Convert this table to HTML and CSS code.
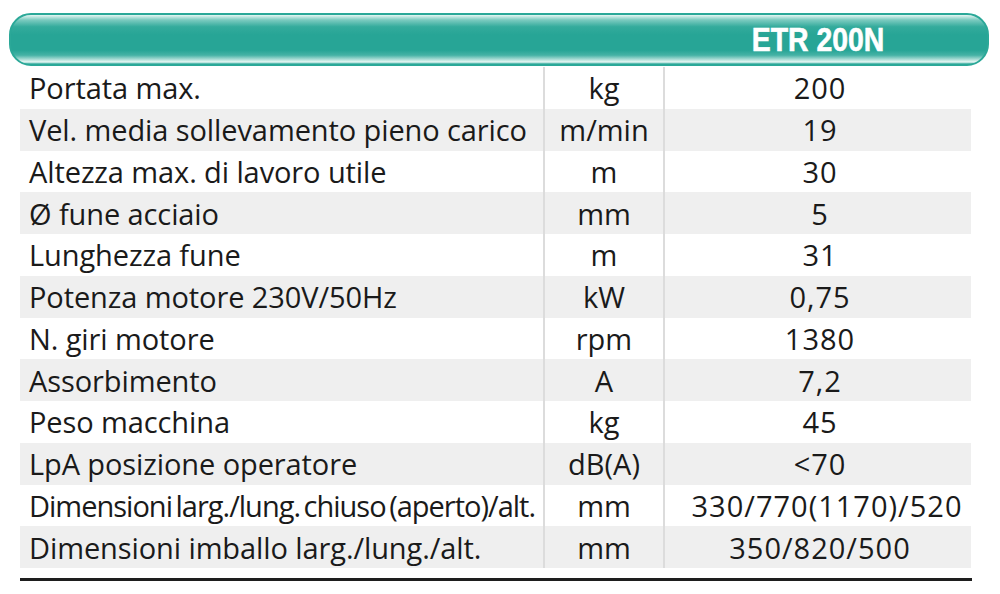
FILE: index.html
```html
<!DOCTYPE html>
<html lang="it">
<head>
<meta charset="utf-8">
<title>ETR 200N</title>
<link rel="stylesheet" href="styles.css">
</head>
<body>
<div class="sheet">
  <div class="header"><span class="model">ETR 200N</span></div>
  <div class="table">
    <div class="row"><div class="label">Portata max.</div><div class="unit">kg</div><div class="val">200</div></div>
    <div class="row alt"><div class="label">Vel. media sollevamento pieno carico</div><div class="unit">m/min</div><div class="val">19</div></div>
    <div class="row"><div class="label">Altezza max. di lavoro utile</div><div class="unit">m</div><div class="val">30</div></div>
    <div class="row alt"><div class="label">Ø fune acciaio</div><div class="unit">mm</div><div class="val">5</div></div>
    <div class="row"><div class="label">Lunghezza fune</div><div class="unit">m</div><div class="val">31</div></div>
    <div class="row alt"><div class="label">Potenza motore 230V/50Hz</div><div class="unit">kW</div><div class="val">0,75</div></div>
    <div class="row"><div class="label">N. giri motore</div><div class="unit">rpm</div><div class="val">1380</div></div>
    <div class="row alt"><div class="label">Assorbimento</div><div class="unit">A</div><div class="val">7,2</div></div>
    <div class="row"><div class="label">Peso macchina</div><div class="unit">kg</div><div class="val">45</div></div>
    <div class="row alt"><div class="label">LpA posizione operatore</div><div class="unit">dB(A)</div><div class="val">&lt;70</div></div>
    <div class="row"><div class="label tight">Dimensioni larg./lung. chiuso (aperto)/alt.</div><div class="unit">mm</div><div class="val wide">330/770(1170)/520</div></div>
    <div class="row alt"><div class="label">Dimensioni imballo larg./lung./alt.</div><div class="unit">mm</div><div class="val">350/820/500</div></div>
  </div>
  <div class="rule"></div>
</div>
</body>
</html>
```
FILE: styles.css
```css
html, body {
  margin: 0;
  padding: 0;
  background: #ffffff;
}
.sheet {
  width: 1000px;
  height: 594px;
  padding-top: 13px;
  box-sizing: border-box;
  font-family: "Open Sans", "Liberation Sans", sans-serif;
  color: #1a1a1a;
}
.header {
  margin-left: 9px;
  width: 980px;
  height: 53px;
  box-sizing: border-box;
  border: 2px solid #2ba898;
  border-radius: 22px;
  background: linear-gradient(to bottom,
    #e6f6f3 0%, #7ccbc0 10%, #34ab9c 24%, #27a596 40%, #27a596 72%,
    #45b2a5 82%, #c6e9e3 93%, #e9f7f5 96%, #2ba898 100%);
  display: flex;
  align-items: center;
}
.model {
  width: 306px;
  margin-left: 654px;
  text-align: center;
  font-family: "Liberation Sans", Arial, sans-serif;
  font-weight: bold;
  font-size: 33px;
  color: #ffffff;
  transform: scaleX(0.86);
  line-height: 1;
  padding-bottom: 1px;
  -webkit-text-stroke: 0.6px #ffffff;
}
.table {
  margin-left: 20px;
  width: 951px;
  margin-top: 1px;
}
.row {
  display: grid;
  grid-template-columns: 523px 122px 306px;
  height: 41.75px;
  align-items: center;
  font-size: 29px;
}
.row.alt {
  background: #efefef;
}
.row > div {
  height: 100%;
  display: flex;
  align-items: center;
  white-space: nowrap;
}
.label {
  padding-left: 9px;
  letter-spacing: -0.1px;
}
.label.tight {
  letter-spacing: -1px;
  word-spacing: -3px;
}
.unit {
  justify-content: center;
  border-left: 2px solid #dcdcdc;
  border-right: 2px solid #dcdcdc;
}
.val {
  justify-content: center;
  letter-spacing: 1px;
  padding-left: 4px;
}
.val.wide {
  padding-left: 18px;
}
.rule {
  margin-left: 20px;
  margin-top: 10px;
  width: 952px;
  height: 3px;
  background: #1e1e1e;
}
```
